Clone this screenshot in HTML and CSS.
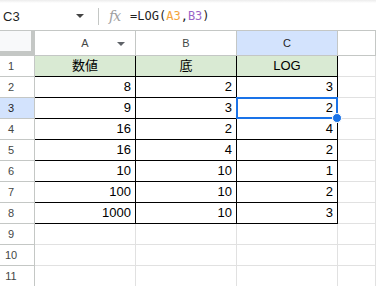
FILE: index.html
```html
<html>
  <head>
    <meta http-equiv="Content-Type" content="text/html; charset=utf-8" />
    <title>LOG</title>
    <link rel="stylesheet" href="styles.css">
  </head>
  <body>
    <div class="toolbar">
      <div class="namebox">C3</div>
      <div class="caret"></div>
      <div class="sep"></div>
      <div class="fx">fx</div>
      <div class="formula">=LOG(<span class="ref1">A3</span>,<span class="ref2">B3</span>)</div>
    </div>
    <div class="sheet">
      <div class="corner"></div>
      <div class="colhead">A<span class="filter"></span></div>
      <div class="colhead">B</div>
      <div class="colhead active">C</div>
      <div class="colhead"></div>

      <div class="rowhead">1</div>
      <div class="cell data title">数値</div>
      <div class="cell data title">底</div>
      <div class="cell data title">LOG</div>
      <div class="cell"></div>

      <div class="rowhead">2</div>
      <div class="cell data num">8</div>
      <div class="cell data num">2</div>
      <div class="cell data num">3</div>
      <div class="cell"></div>

      <div class="rowhead active">3</div>
      <div class="cell data num">9</div>
      <div class="cell data num">3</div>
      <div class="cell data num selected">2</div>
      <div class="cell"></div>

      <div class="rowhead">4</div>
      <div class="cell data num">16</div>
      <div class="cell data num">2</div>
      <div class="cell data num">4</div>
      <div class="cell"></div>

      <div class="rowhead">5</div>
      <div class="cell data num">16</div>
      <div class="cell data num">4</div>
      <div class="cell data num">2</div>
      <div class="cell"></div>

      <div class="rowhead">6</div>
      <div class="cell data num">10</div>
      <div class="cell data num">10</div>
      <div class="cell data num">1</div>
      <div class="cell"></div>

      <div class="rowhead">7</div>
      <div class="cell data num">100</div>
      <div class="cell data num">10</div>
      <div class="cell data num">2</div>
      <div class="cell"></div>

      <div class="rowhead">8</div>
      <div class="cell data num">1000</div>
      <div class="cell data num">10</div>
      <div class="cell data num">3</div>
      <div class="cell"></div>

      <div class="rowhead">9</div>
      <div class="cell"></div>
      <div class="cell"></div>
      <div class="cell"></div>
      <div class="cell"></div>

      <div class="rowhead">10</div>
      <div class="cell"></div>
      <div class="cell"></div>
      <div class="cell"></div>
      <div class="cell"></div>

      <div class="rowhead">11</div>
      <div class="cell"></div>
      <div class="cell"></div>
      <div class="cell"></div>
      <div class="cell"></div>
    </div>
  </body>
</html>
```
FILE: styles.css
```css
body {
  margin: 0;
  font-family: "Liberation Sans", Arial, "Noto Sans CJK JP", sans-serif;
  background: #fff;
  overflow: hidden;
}

.toolbar {
  height: 30px;
  border-bottom: 1px solid #c4c7c5;
  display: flex;
  align-items: center;
  background: linear-gradient(#ececec, #fff 3px);
}
.namebox {
  font-size: 13px;
  color: #1f1f1f;
  margin-left: 3px;
  width: 73px;
  margin-top: 2px;
}
.caret {
  width: 0;
  height: 0;
  border-left: 4px solid transparent;
  border-right: 4px solid transparent;
  border-top: 4px solid #444;
  margin-top: 2px;
}
.sep {
  width: 1px;
  height: 17px;
  background: #c4c7c5;
  margin-left: 14px;
  margin-top: 2px;
}
.fx {
  font-family: "DejaVu Serif", serif;
  font-style: italic;
  font-size: 14px;
  color: #a0a0a0;
  margin-left: 10px;
  letter-spacing: -1px;
  margin-top: 1px;
}
.formula {
  font-family: "DejaVu Sans Mono", monospace;
  font-size: 12px;
  color: #1f1f1f;
  margin-left: 10px;
  margin-top: 2px;
}
.ref1 { color: #f4a33c; }
.ref2 { color: #9a64c8; }

.sheet {
  display: grid;
  grid-template-columns: 35px 101px 101px 101px 1fr;
  grid-template-rows: 25px repeat(11, 21px);
}
.sheet > div {
  box-sizing: border-box;
}
.corner {
  background: #f8f9fa;
  border-right: 4px solid #c4c7c5;
  border-bottom: 5px solid #c4c7c5;
}
.colhead {
  position: relative;
  font-size: 11px;
  color: #444746;
  text-align: center;
  line-height: 24px;
  border-right: 1px solid #c4c7c5;
  border-bottom: 1px solid #c4c7c5;
}
.colhead.active { background: #d3e3fd; color: #1f1f1f; }
.colhead:last-child { border-right: none; }
.filter {
  position: absolute;
  right: 10px;
  top: 11px;
  width: 0;
  height: 0;
  border-left: 4px solid transparent;
  border-right: 4px solid transparent;
  border-top: 4px solid #5f6368;
}
.rowhead {
  font-size: 11px;
  color: #444746;
  text-align: center;
  padding-right: 12px;
  line-height: 21px;
  border-right: 1px solid #c4c7c5;
  border-bottom: 1px solid #c4c7c5;
}
.rowhead.active { background: #d3e3fd; color: #1f1f1f; }
.cell {
  font-size: 13px;
  color: #000;
  line-height: 20px;
  border-right: 1px solid #e1e1e1;
  border-bottom: 1px solid #e1e1e1;
}
.cell.data {
  border-right-color: #000;
  border-bottom-color: #000;
}
.title {
  background: #d9ead3;
  text-align: center;
}
.num {
  text-align: right;
  padding-right: 4px;
}
.selected {
  position: relative;
}
.selected::after {
  content: "";
  position: absolute;
  left: -1px;
  top: -1px;
  right: -1px;
  bottom: -1px;
  border: 2px solid #1a73e8;
}
.selected::before {
  content: "";
  position: absolute;
  right: -5px;
  bottom: -5px;
  width: 8px;
  height: 8px;
  border-radius: 50%;
  background: #1a73e8;
  border: 1px solid #fff;
  z-index: 2;
}
```
